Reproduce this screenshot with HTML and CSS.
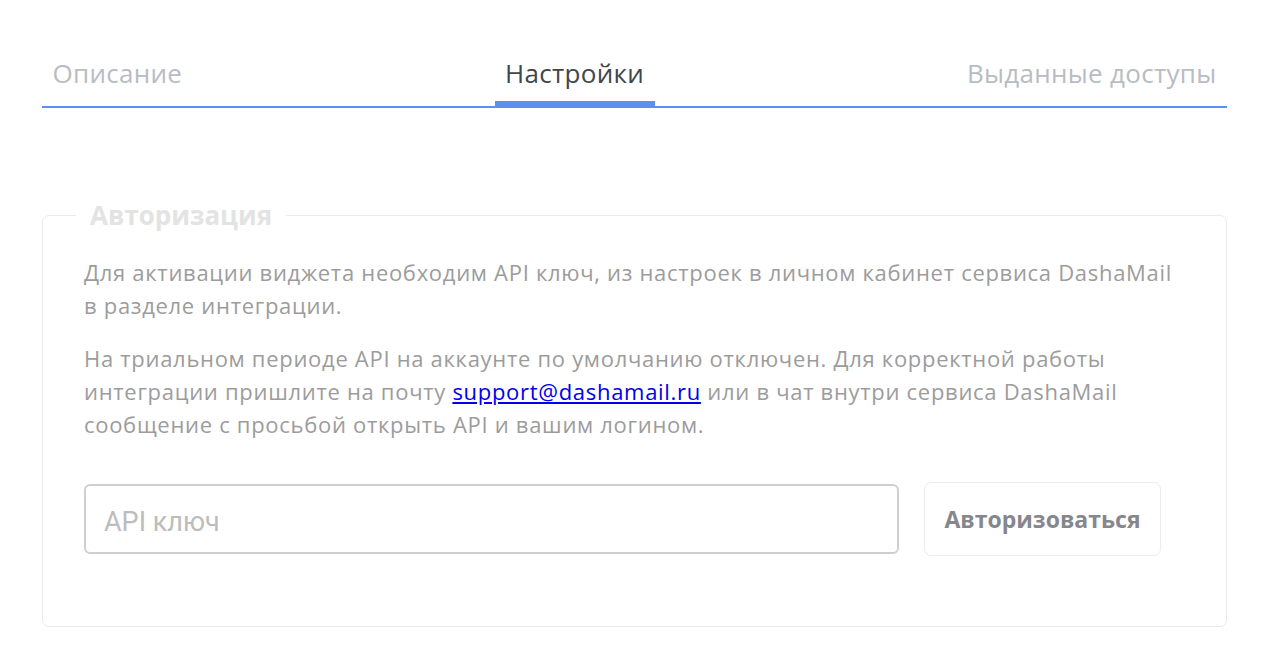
FILE: index.html
```html
<!DOCTYPE html>
<html lang="ru">
<head>
<meta charset="utf-8">
<title>Настройки</title>
<link rel="stylesheet" href="styles.css">
</head>
<body>
<div class="page">
  <nav class="tabs">
    <a class="tab">Описание</a>
    <a class="tab tab-active">Настройки</a>
    <a class="tab">Выданные доступы</a>
  </nav>

  <fieldset class="auth">
    <legend class="auth-title">Авторизация</legend>
    <p class="note">Для активации виджета необходим API ключ, из настроек в личном кабинет сервиса DashaMail<br>в разделе интеграции.</p>
    <p class="note note-second">На триальном периоде API на аккаунте по умолчанию отключен. Для корректной работы<br>интеграции пришлите на почту <a class="mail" href="#">support@dashamail.ru</a> или в чат внутри сервиса DashaMail<br>сообщение с просьбой открыть API и вашим логином.</p>
    <div class="auth-row">
      <input class="key-input" type="text" placeholder="API ключ">
      <button class="auth-btn" type="button">Авторизоваться</button>
    </div>
  </fieldset>
</div>
</body>
</html>
```

FILE: styles.css
```css
* { box-sizing: border-box; }

html, body {
  margin: 0;
  background: #fff;
}

body {
  font-family: "Open Sans", "Noto Sans", sans-serif;
}

.page {
  padding: 50px 39px 0 42px;
}

/* tab strip */
.tabs {
  display: flex;
  justify-content: space-between;
  border-bottom: 2px solid #5b8ff0;
  height: 58px;
}

.tab {
  position: relative;
  display: block;
  padding: 6px 10.5px 0;
  font-size: 26px;
  letter-spacing: 0.3px;
  line-height: 34px;
  color: #b8bcc4;
  cursor: pointer;
}

.tab-active {
  color: #41464d;
}

.tab-active::after {
  content: "";
  position: absolute;
  left: 0;
  right: 0;
  bottom: -2px;
  height: 7px;
  background: #5b8ff0;
}

/* authorization box */
.auth {
  margin: 93px 0 0;
  padding: 27px 42px 70px 41px;
  border: 1px solid #eaeaea;
  border-radius: 7px;
  min-width: 0;
}

.auth-title {
  margin-left: -8px;
  padding: 0 14px;
  font-size: 26px;
  font-weight: 700;
  color: #e3e3e3;
  line-height: 28px;
}

.note {
  margin: 0;
  font-size: 22px;
  letter-spacing: 0.7px;
  line-height: 33px;
  color: #9c9c9c;
  white-space: nowrap;
}

.note-second {
  margin-top: 20px;
}

.mail {
  color: #0000ee;
  text-decoration: underline;
}

.auth-row {
  display: flex;
  align-items: center;
  gap: 25px;
  margin-top: 41px;
}

.key-input {
  width: 815px;
  height: 70px;
  padding: 5px 18px 0;
  border: 2px solid #cfcfcf;
  border-radius: 6px;
  font-family: Roboto, "Noto Sans", sans-serif;
  font-size: 27px;
  color: #555;
  outline: none;
}

.key-input::placeholder {
  color: #bcbcbc;
}

.auth-btn {
  width: 237px;
  height: 74px;
  border: 1px solid #ececec;
  border-radius: 7px;
  background: #fff;
  font-family: "Open Sans", "Noto Sans", sans-serif;
  font-size: 23px;
  font-weight: 700;
  color: #85878c;
  cursor: pointer;
}
```
